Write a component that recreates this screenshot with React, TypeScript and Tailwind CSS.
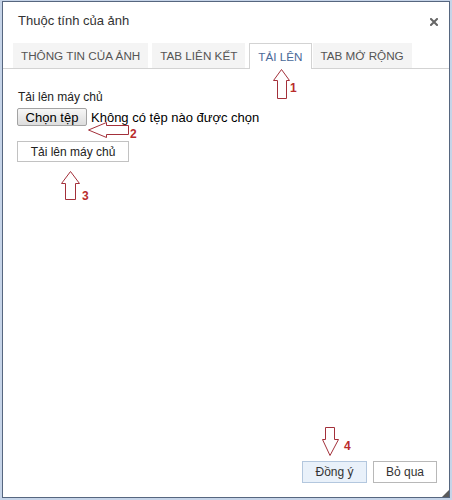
import React from "react";

const tabs = [
  { label: "THÔNG TIN CỦA ẢNH", active: false, mr: "mr-[4px]" },
  { label: "TAB LIÊN KẾT", active: false, mr: "mr-[4px]" },
  { label: "TẢI LÊN", active: true, mr: "mr-[1px]" },
  { label: "TAB MỞ RỘNG", active: false, mr: "" },
];

export default function App() {
  return (
    <div className="relative w-[452px] h-[500px] bg-[#c6d4e8] pt-[1px] px-[2px] pb-[2px] font-['Liberation_Sans',Arial,sans-serif]">
      <div className="relative h-full flex flex-col border border-[#56667f] bg-white">
        {/* Header */}
        <div className="h-[41px] flex items-start justify-between pl-[15px] pr-[11px] pt-[10px]">
          <span className="text-[13px] leading-[18px] text-[#333]">Thuộc tính của ảnh</span>
          <svg width="8" height="8" viewBox="0 0 8 8" className="mt-[6px]">
            <path d="M1 1 L7 7 M7 1 L1 7" stroke="#666" strokeWidth="2" strokeLinecap="square" />
          </svg>
        </div>

        {/* Tabs */}
        <div className="h-[26px] flex items-start pl-[10px] border-b border-[#d3d3d3]">
          {tabs.map((t) =>
            t.active ? (
              <div
                key={t.label}
                className={`relative z-10 h-[26px] px-[8px] flex items-center bg-white border border-b-0 border-[#d3d3d3] text-[11.7px] text-[#4a6a99] ${t.mr}`}
              >
                {t.label}
              </div>
            ) : (
              <div
                key={t.label}
                className={`h-[25px] px-[8px] flex items-center bg-[#f4f4f4] text-[11.7px] text-[#555] ${t.mr}`}
              >
                {t.label}
              </div>
            )
          )}
        </div>

        {/* Content */}
        <div className="flex-1 flex flex-col items-start pl-[14px] pt-[20px]">
          <div className="text-[12px] leading-[16px] text-[#222] pl-[1px]">Tải lên máy chủ</div>
          <div className="mt-[3px] h-[18px] flex items-center">
            <div className="h-[18px] w-[70px] flex items-center justify-center rounded-[2px] border border-[#a3a3a3] bg-gradient-to-b from-[#f7f7f7] to-[#dddddd] text-[13px] leading-none text-black">
              Chọn tệp
            </div>
            <span className="ml-[4px] text-[13px] leading-none text-black">Không có tệp nào được chọn</span>
          </div>
          <div className="mt-[15px] h-[21px] w-[112px] flex items-center justify-center border border-[#c2c2c2] bg-white text-[12px] leading-none text-[#222]">
            Tải lên máy chủ
          </div>
        </div>

        {/* Footer */}
        <div className="flex justify-end gap-[6px] pr-[12px] pb-[14px]">
          <div className="h-[22px] w-[65px] flex items-center justify-center border border-[#b3c7de] bg-[#e9f1fa] text-[12px] leading-none text-[#333]">
            Đồng ý
          </div>
          <div className="h-[22px] w-[64px] flex items-center justify-center border border-[#b8b8b8] bg-white text-[12px] leading-none text-[#333]">
            Bỏ qua
          </div>
        </div>

        {/* resize grip */}
        <svg width="7" height="7" viewBox="0 0 7 7" className="absolute right-0 bottom-0">
          <polygon points="7,0 7,7 0,7" fill="#5a5a5a" />
        </svg>
      </div>

      {/* Annotation arrows */}
      <svg width="452" height="500" viewBox="0 0 452 500" className="absolute left-0 top-0 pointer-events-none">
        <g fill="none" stroke="#a3303a" strokeWidth="1" strokeLinejoin="miter">
          <polygon points="281.5,69.5 289.5,80.5 286.5,80.5 286.5,98.5 277.5,98.5 277.5,80.5 273.5,80.5" />
          <polygon points="88.5,130 106.5,122.5 106.5,125.5 128.5,125.5 128.5,134.5 106.5,134.5 106.5,137.5" />
          <polygon points="70.5,171.5 79.5,183.5 75.5,183.5 75.5,199.5 65.5,199.5 65.5,183.5 61.5,183.5" />
          <polygon points="325.5,427.5 334.5,427.5 334.5,439.5 338.5,439.5 330,455.5 322.5,439.5 325.5,439.5" />
        </g>
      </svg>
      <span className="absolute left-[290px] top-[82px] text-[12px] leading-[12px] font-bold text-[#b92c2c]">1</span>
      <span className="absolute left-[130px] top-[128px] text-[12px] leading-[12px] font-bold text-[#b92c2c]">2</span>
      <span className="absolute left-[82px] top-[190px] text-[12px] leading-[12px] font-bold text-[#b92c2c]">3</span>
      <span className="absolute left-[344px] top-[440px] text-[12px] leading-[12px] font-bold text-[#b92c2c]">4</span>
    </div>
  );
}
